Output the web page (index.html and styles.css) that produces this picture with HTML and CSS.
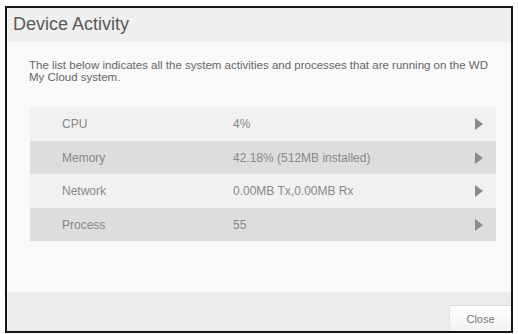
FILE: index.html
```html
<!DOCTYPE html>
<html lang="en">
  <head>
    <meta charset="UTF-8" />
    <title>Device Activity</title>
    <link rel="stylesheet" href="styles.css">
  </head>
  <body>
    <div class="dialog">
      <div class="dialog-header">
        <h1>Device Activity</h1>
      </div>

      <div class="dialog-body">
        <p class="intro">The list below indicates all the system activities and processes that are running on the WD My Cloud system.</p>

        <!-- activity list -->
        <div class="activity-list">
          <div class="activity-row">
            <span class="activity-name">CPU</span>
            <span class="activity-value">4%</span>
            <svg class="arrow" width="8" height="12" viewBox="0 0 8 12"><polygon points="0,0 8,6 0,12" /></svg>
          </div>
          <div class="activity-row alt">
            <span class="activity-name">Memory</span>
            <span class="activity-value">42.18% (512MB installed)</span>
            <svg class="arrow" width="8" height="12" viewBox="0 0 8 12"><polygon points="0,0 8,6 0,12" /></svg>
          </div>
          <div class="activity-row">
            <span class="activity-name">Network</span>
            <span class="activity-value">0.00MB Tx,0.00MB Rx</span>
            <svg class="arrow" width="8" height="12" viewBox="0 0 8 12"><polygon points="0,0 8,6 0,12" /></svg>
          </div>
          <div class="activity-row alt">
            <span class="activity-name">Process</span>
            <span class="activity-value">55</span>
            <svg class="arrow" width="8" height="12" viewBox="0 0 8 12"><polygon points="0,0 8,6 0,12" /></svg>
          </div>
        </div>
      </div>

      <div class="dialog-footer">
        <button class="button">Close</button>
      </div>
    </div>
  </body>
</html>
```

FILE: styles.css
```css
body {
  margin: 0;
  padding: 6px 0 0 5px;
  background: #fff;
  font-family: "Liberation Sans", Arial, sans-serif;
}

.dialog {
  box-sizing: border-box;
  width: 508px;
  height: 327px;
  border: 2px solid #161616;
  display: flex;
  flex-direction: column;
  background: #f9f9f9;
}

.dialog-header {
  height: 34px;
  background: #efefef;
  padding-left: 6px;
}

h1 {
  margin: 0;
  font-size: 18px;
  font-weight: normal;
  line-height: 32px;
  color: #595959;
}

.dialog-body {
  flex: 1;
  padding: 17px 15px 0 22px;
}

.intro {
  margin: 0 0 24px 0;
  font-size: 11.5px;
  line-height: 12px;
  color: #666;
}

.activity-list {
  margin-left: 1px;
}

.activity-row {
  display: flex;
  align-items: center;
  height: 34px;
  background: #f1f1f1;
  font-size: 12px;
  color: #888;
}

.activity-row.alt {
  background: #dddddd;
  height: 33px;
}

.activity-name {
  width: 171px;
  padding-left: 32px;
}

.activity-value {
  flex: 1;
}

.arrow {
  fill: #8a8a8a;
  margin-right: 13px;
}

.dialog-footer {
  height: 39px;
  background: #ececec;
  display: flex;
  justify-content: flex-end;
  align-items: flex-end;
}

.button {
  width: 62px;
  height: 26px;
  border: none;
  border-top: 1px solid #dcdcdc;
  border-left: 1px solid #e2e2e2;
  background: linear-gradient(#ffffff, #f2f2f2);
  font-family: "Liberation Sans", Arial, sans-serif;
  font-size: 11px;
  color: #777;
  cursor: pointer;
}
```
